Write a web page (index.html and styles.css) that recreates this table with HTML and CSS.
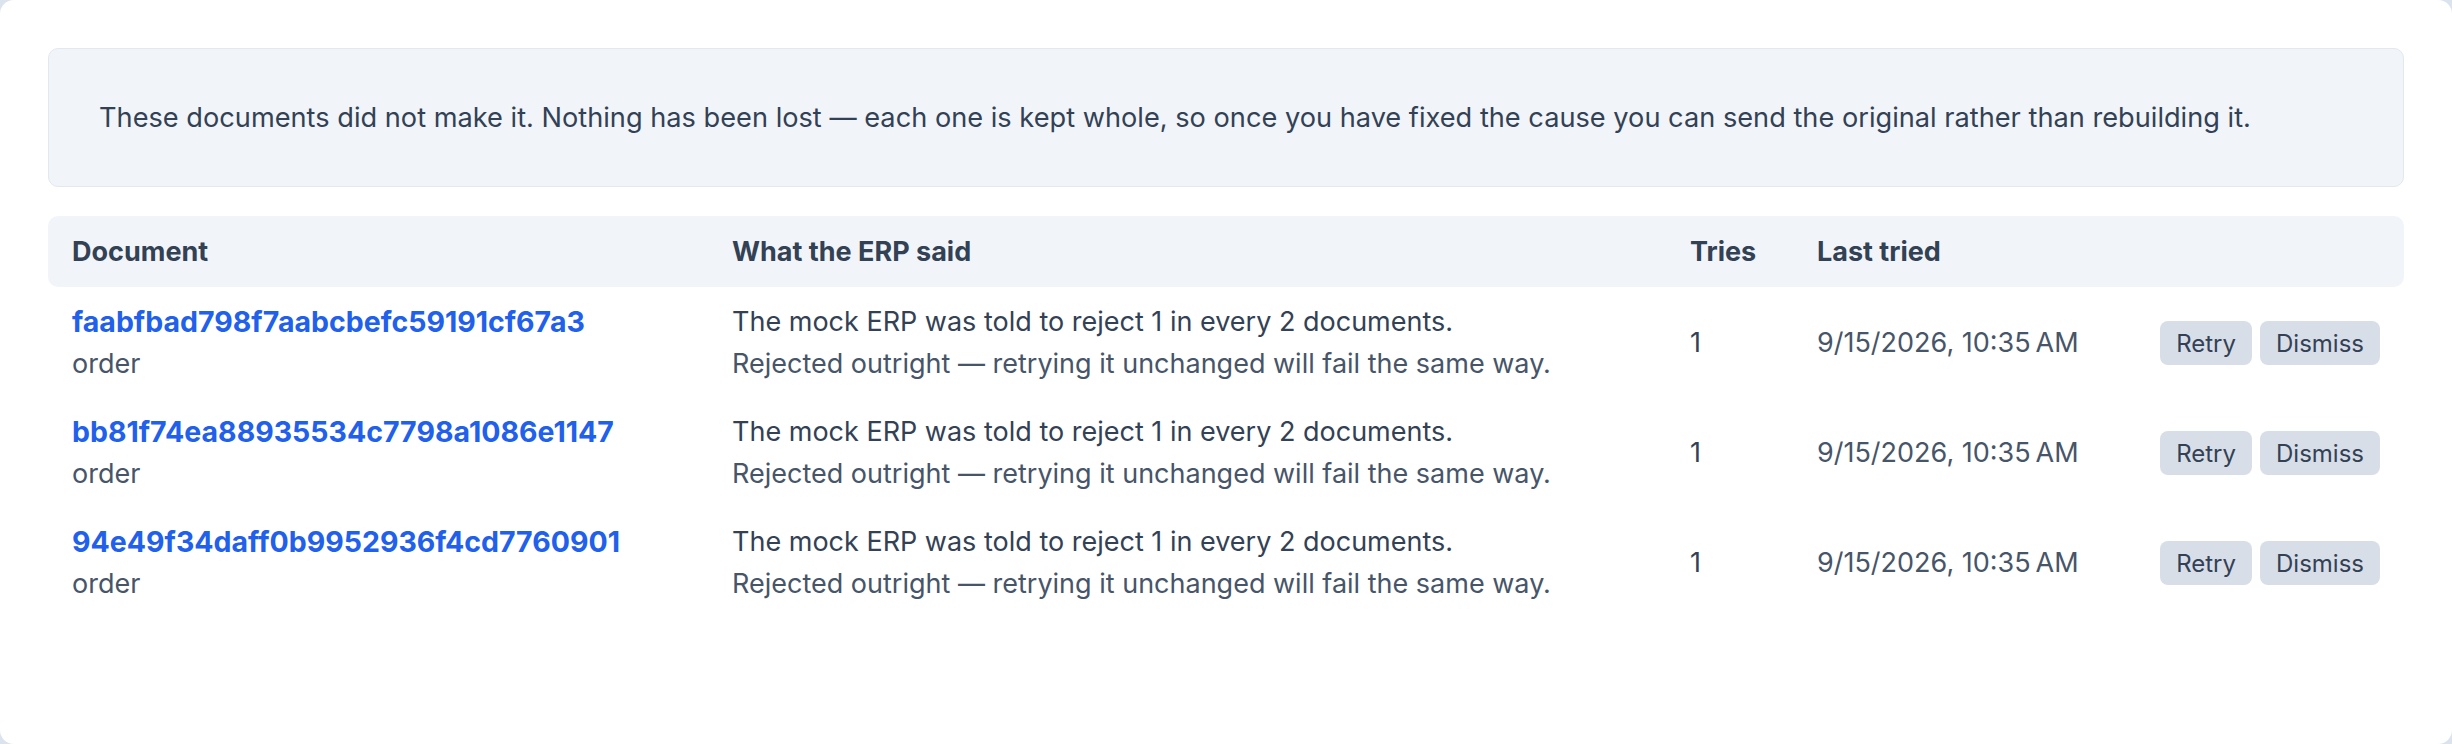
FILE: index.html
```html
<!DOCTYPE html>
<html lang="en">
<head>
    <meta charset="UTF-8">
    <meta name="viewport" content="width=device-width, initial-scale=1.0">
    <title>Failed documents</title>
    <link rel="stylesheet" href="styles.css">
</head>
<body>
    <div class="card">
        <div class="notice">
            These documents did not make it. Nothing has been lost — each one is kept whole, so once you have fixed the cause you can send the original rather than rebuilding it.
        </div>

        <table class="failed-table">
            <colgroup>
                <col class="col-doc">
                <col class="col-msg">
                <col class="col-tries">
                <col class="col-date">
                <col class="col-actions">
            </colgroup>
            <thead>
                <tr>
                    <th>Document</th>
                    <th>What the ERP said</th>
                    <th>Tries</th>
                    <th>Last tried</th>
                    <th></th>
                </tr>
            </thead>
            <tbody>
                <tr>
                    <td>
                        <a href="#" class="doc-id">faabfbad798f7aabcbefc59191cf67a3</a>
                        <div class="doc-kind">order</div>
                    </td>
                    <td>
                        <div class="msg">The mock ERP was told to reject 1 in every 2 documents.</div>
                        <div class="msg-hint">Rejected outright — retrying it unchanged will fail the same way.</div>
                    </td>
                    <td class="tries">1</td>
                    <td class="date">9/15/2026, 10:35&#8239;AM</td>
                    <td class="actions">
                        <button class="btn">Retry</button><button class="btn">Dismiss</button>
                    </td>
                </tr>
                <tr>
                    <td>
                        <a href="#" class="doc-id">bb81f74ea88935534c7798a1086e1147</a>
                        <div class="doc-kind">order</div>
                    </td>
                    <td>
                        <div class="msg">The mock ERP was told to reject 1 in every 2 documents.</div>
                        <div class="msg-hint">Rejected outright — retrying it unchanged will fail the same way.</div>
                    </td>
                    <td class="tries">1</td>
                    <td class="date">9/15/2026, 10:35&#8239;AM</td>
                    <td class="actions">
                        <button class="btn">Retry</button><button class="btn">Dismiss</button>
                    </td>
                </tr>
                <tr>
                    <td>
                        <a href="#" class="doc-id">94e49f34daff0b9952936f4cd7760901</a>
                        <div class="doc-kind">order</div>
                    </td>
                    <td>
                        <div class="msg">The mock ERP was told to reject 1 in every 2 documents.</div>
                        <div class="msg-hint">Rejected outright — retrying it unchanged will fail the same way.</div>
                    </td>
                    <td class="tries">1</td>
                    <td class="date">9/15/2026, 10:35&#8239;AM</td>
                    <td class="actions">
                        <button class="btn">Retry</button><button class="btn">Dismiss</button>
                    </td>
                </tr>
            </tbody>
        </table>
    </div>
</body>
</html>
```
FILE: styles.css
```css
html {
    background-color: #dbe3ee;
}

body {
    font-family: Inter, "Liberation Sans", sans-serif;
    font-size: 27px;
    color: #334155;
    margin: 0;
    padding: 0;
}

.card {
    box-sizing: border-box;
    height: 744px;
    padding: 48px;
    background-color: white;
    border-radius: 14px;
}

.notice {
    padding: 48px 50px;
    line-height: 41px;
    font-size: 27.2px;
    background-color: #f1f5f9;
    border: 1px solid #e2e8f0;
    border-radius: 10px;
}

.failed-table {
    width: 100%;
    margin-top: 29px;
    border-collapse: separate;
    border-spacing: 0;
    table-layout: fixed;
}

.col-doc { width: 660px; }
.col-msg { width: 958px; }
.col-tries { width: 127px; }
.col-date { width: 340px; }

th {
    height: 71px;
    padding: 0 24px;
    text-align: left;
    font-weight: 700;
    background-color: #f1f5f9;
}

th:first-child {
    border-radius: 10px 0 0 10px;
}

th:last-child {
    border-radius: 0 10px 10px 0;
}

td {
    padding: 14px 24px 12px;
    line-height: 42px;
    vertical-align: middle;
}

.doc-id {
    display: block;
    font-size: 28.5px;
    color: #2160ea;
    font-weight: 700;
    text-decoration: none;
}

.doc-kind,
.msg-hint,
.date {
    color: #475569;
}

.actions {
    text-align: right;
    white-space: nowrap;
    padding-right: 24px;
}

.btn {
    height: 44px;
    padding: 0 16px;
    font-family: inherit;
    font-size: 24px;
    color: #334155;
    background-color: #d8dee8;
    border: none;
    border-radius: 8px;
    cursor: pointer;
}

.btn + .btn {
    margin-left: 8px;
}
```
